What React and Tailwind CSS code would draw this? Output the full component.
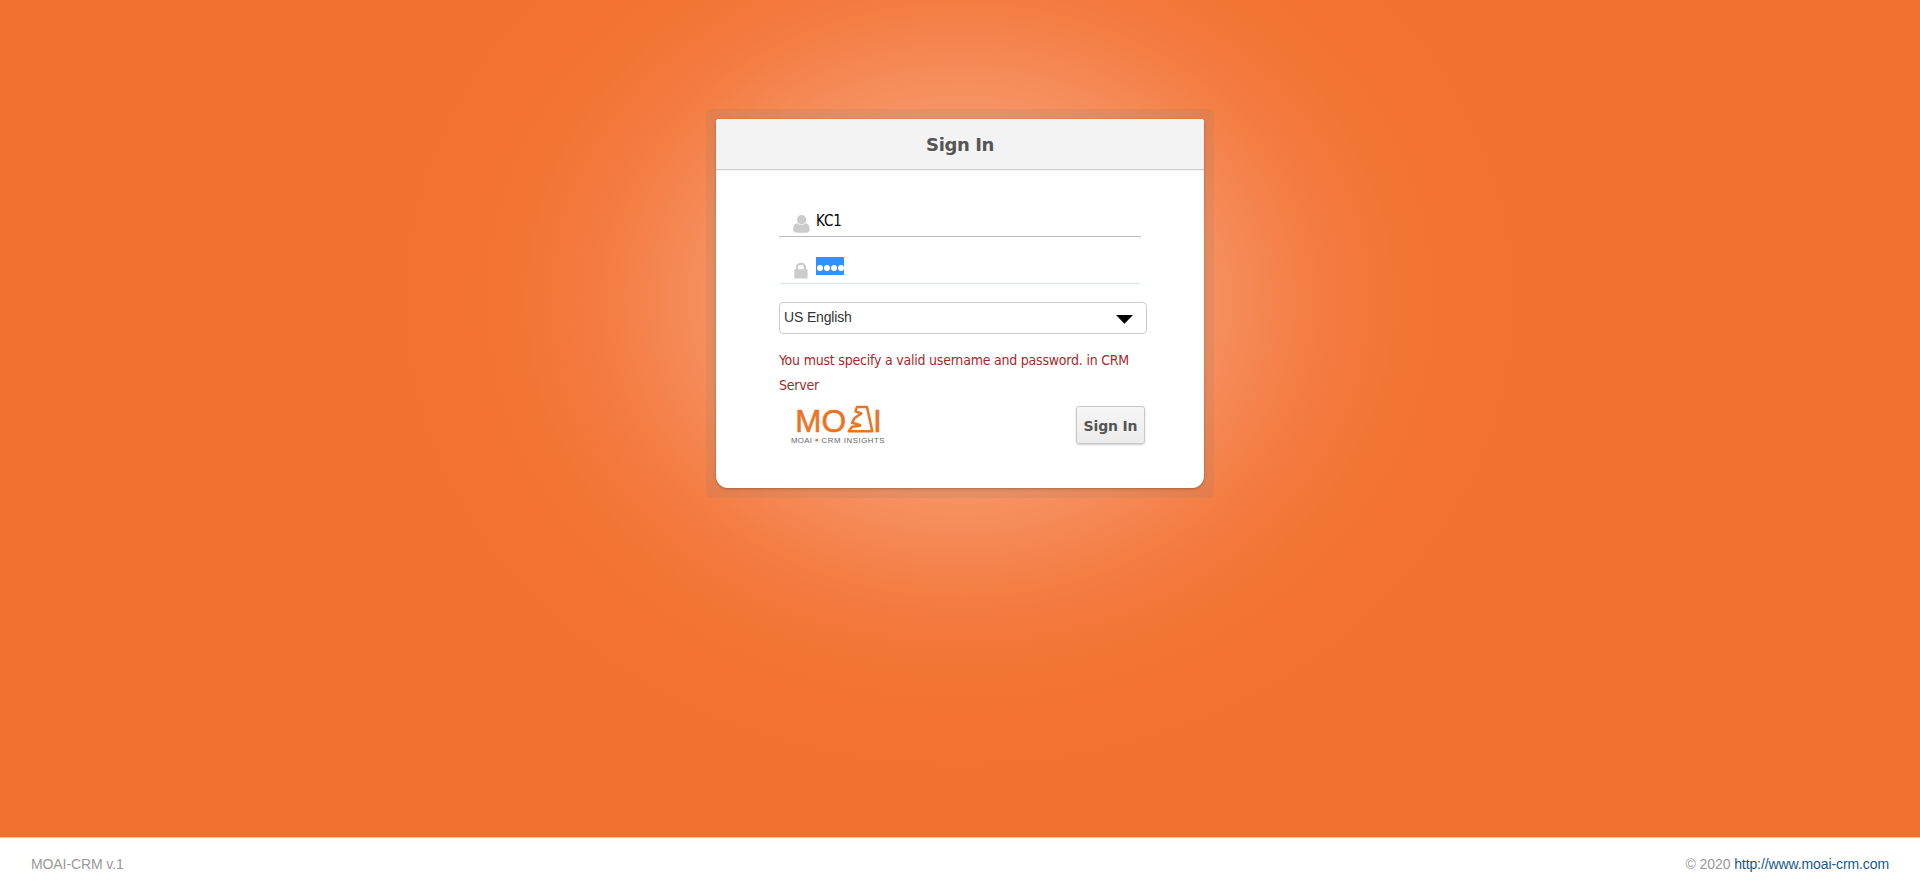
function UserIcon() {
  return (
    <svg width="17" height="18" viewBox="0 0 17 18" fill="#cccccc">
      <circle cx="8.6" cy="4.7" r="4.7" />
      <path d="M4.2 8.2C1.4 8.4.2 11.4.2 14.6c0 2 1.2 3.2 3.2 3.2h10c2 0 3.200-1.200 3.200-3.200 0-3.200-1.200-6.200-4-6.400-2.400 2.200-6 2.200-8.400 0z" />
    </svg>
  );
}

function LockIcon() {
  return (
    <svg width="14" height="17" viewBox="0 0 14 17">
      <path d="M3 8V5.600a4 4 0 0 1 8 0V8" fill="none" stroke="#cccccc" strokeWidth="2.400" />
      <rect x="0.300" y="7.200" width="13.300" height="9.300" rx="0.800" fill="#cccccc" />
    </svg>
  );
}

function Logo() {
  return (
    <svg width="96" height="41" viewBox="0 0 96 41" className="block">
      <g fill="#ea7426" stroke="#ea7426" strokeWidth="0.6" fontFamily="'Liberation Sans', Arial, sans-serif" fontSize="32">
        <text transform="translate(5.200 28.300) scale(0.98 1)">M</text>
        <text transform="translate(31.400 28.300) scale(0.99 1)">O</text>
        <text x="83.100" y="28.300">I</text>
      </g>
      <path d="M67 2.900H77L82.300 27.200H58.800L62 22.700L70 21.700L70 21L62 18.800L64.700 14L71.300 9.500L65.500 7.300Z" fill="none" stroke="#ea7426" strokeWidth="2.500" strokeLinejoin="round" />
      <g fill="#666666" fontFamily="'Liberation Sans', Arial, sans-serif" fontSize="7.800">
        <text x="1" y="38.700" textLength="21">MOAI</text>
        <text x="31.500" y="38.700" textLength="63">CRM INSIGHTS</text>
      </g>
      <circle cx="26.700" cy="36.200" r="1.400" fill="#ea7426" />
    </svg>
  );
}

export default function App() {
  return (
    <div className="flex h-[888px] w-full flex-col overflow-hidden bg-white font-['DejaVu_Sans_Condensed','DejaVu_Sans',sans-serif]">
      <main className="flex flex-1 items-start justify-center bg-[#f27030] bg-[radial-gradient(560px_470px_at_960px_300px,#fcb493_0%,#f79b70_32%,#f68f5e_45%,#f4834b_57%,#f47a3f_67%,#f37536_78%,#f37232_90%,#f27030_100%)] pt-[109px]">
        <div className="rounded-[5px] bg-[#777777]/12 p-[10px]">
          <form className="h-[369px] w-[488px] overflow-hidden rounded-t-[3px] rounded-b-[12px] bg-white shadow-[0_1px_3px_rgba(0,0,0,0.25)]">
            <h1 className="flex h-[51px] items-center justify-center border-b border-[#cccccc] bg-[#f3f3f3] font-['DejaVu_Sans',sans-serif] text-[18px] font-bold tracking-[-0.4px] text-[#555555] shadow-[0_1px_1px_#f3f3f3]">
              Sign In
            </h1>
            <div className="flex flex-col pl-[63px]">
              <div className="mt-[37px] flex h-[30px] w-[362px] border-b border-[#bbbbbb] pl-[14px]">
                <div className="pt-[8px]"><UserIcon /></div>
                <span className="pt-[4px] pl-[6px] text-[15px] leading-[20px] tracking-[-0.1px] text-black">KC1</span>
              </div>
              <div className="ml-px mt-[20px] flex h-[27px] w-[360px] border-b border-[#d0e8f0] pl-[14px]">
                <div className="pt-[5px]"><LockIcon /></div>
                <span className="ml-[8px] flex h-[18px] w-[28px] items-center justify-center gap-px bg-[#3390ff] pt-[3px]">
                  <i className="size-[6px] rounded-full bg-white" />
                  <i className="size-[6px] rounded-full bg-white" />
                  <i className="size-[6px] rounded-full bg-white" />
                  <i className="size-[6px] rounded-full bg-white" />
                </span>
              </div>
              <div className="mt-[18px] flex h-[32px] w-[368px] items-center justify-between rounded-[4px] border border-[#cccccc] pr-[13px] pb-[2px] pl-[4px] font-['Liberation_Sans',sans-serif] text-[14px] tracking-[-0.15px] text-[#333333]">
                <span>US English</span>
                <svg width="17" height="9" viewBox="0 0 17 9" className="mt-[4px]"><path d="M0 0h17L8.500 8.700z" /></svg>
              </div>
              <p className="mt-[14px] w-[369px] text-[14px] leading-[25px] tracking-[-0.22px] text-[#a52a2a]">
                You must specify a valid username and password. in CRM Server
              </p>
              <div className="mt-[8px] flex w-[366px] items-start justify-between pl-[11px]">
                <div className="-mt-[2px]"><Logo /></div>
                <button type="button" className="h-[38px] w-[69px] rounded-[3px] border border-[#c8c8c8] bg-gradient-to-b from-[#f6f6f6] to-[#ececec] pt-[2px] font-['DejaVu_Sans',sans-serif] text-[14px] font-bold tracking-[-0.15px] whitespace-nowrap text-[#555555] shadow-[0_1px_2px_rgba(0,0,0,0.2)]">
                  Sign In
                </button>
              </div>
            </div>
          </form>
        </div>
      </main>
      <footer className="flex h-[51px] items-center justify-between border-t border-[#cccccc] px-[31px] pt-[2px] font-['Liberation_Sans',sans-serif] text-[14px] tracking-[-0.1px] text-[#999999]">
        <span>MOAI-CRM v.1</span>
        <span>© 2020 <a className="text-[#15598f]">http://www.moai-crm.com</a></span>
      </footer>
    </div>
  );
}
